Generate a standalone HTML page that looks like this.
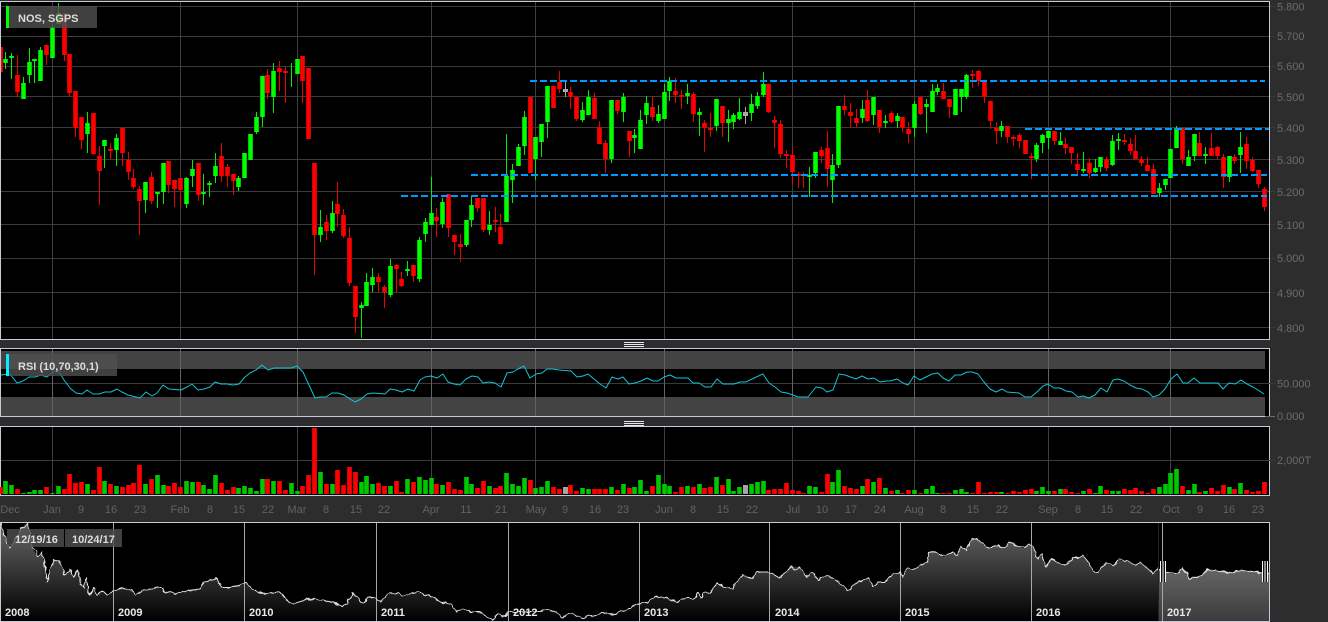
<!DOCTYPE html>
<html><head><meta charset="utf-8"><style>
html,body{margin:0;padding:0;background:#2d2d2d;width:1328px;height:622px;overflow:hidden}
svg{display:block}
text{font-family:"Liberation Sans",Arial,sans-serif;font-size:11px}
.a{fill:#6c6c6c}
.d{fill:#626262;text-anchor:middle}
.l{fill:#dcdcdc;font-weight:bold}
.y{fill:#e8e8e8;font-weight:bold}
</style></head><body>
<svg width="1328" height="622" viewBox="0 0 1328 622" xmlns="http://www.w3.org/2000/svg">
<defs>
<clipPath id="p1"><rect x="1" y="2" width="1268" height="337"/></clipPath>
<clipPath id="nl"><rect x="1" y="523" width="1157" height="98"/></clipPath>
<clipPath id="nr"><rect x="1159" y="523" width="110" height="98"/></clipPath>
<clipPath id="na"><rect x="1" y="523" width="1268" height="98"/></clipPath>
<linearGradient id="g1" gradientUnits="userSpaceOnUse" x1="0" y1="535" x2="0" y2="621"><stop offset="0" stop-color="#5c5c5c"/><stop offset="1" stop-color="#000"/></linearGradient>
<linearGradient id="g2" gradientUnits="userSpaceOnUse" x1="0" y1="565" x2="0" y2="621"><stop offset="0" stop-color="#686868"/><stop offset="1" stop-color="#3c3c3c"/></linearGradient>
<filter id="jag" filterUnits="userSpaceOnUse" x="0" y="515" width="1280" height="107" color-interpolation-filters="sRGB">
<feTurbulence type="fractalNoise" baseFrequency="0.22" numOctaves="1" seed="4" result="n"/>
<feDisplacementMap in="SourceGraphic" in2="n" scale="5" xChannelSelector="R" yChannelSelector="G"/>
</filter>
<path id="gb" fill="none" d="M5.5 59V63M11.5 56V58M23.5 83V99M29.5 62V75M34.5 59V61M40.5 50V81M52.5 27V58M58.5 13V24M87.5 123V134M104.5 140V146M116.5 138V150M145.5 182V200M157.5 192V194M163.5 163V192M186.5 178V204M192.5 169V176M203.5 192V194M209.5 183V185M215.5 166V176M238.5 178V187M244.5 153V178M250.5 134V160M256.5 117V132M262.5 76V117M273.5 71V97M297.5 59V74M320.5 227V235M332.5 213V231M361.5 305V308M366.5 282V306M372.5 277V285M390.5 266V295M407.5 269V271M419.5 240V279M425.5 222V234M431.5 213V225M442.5 202V224M466.5 220V245M471.5 205V220M489.5 225V230M506.5 176V222M512.5 170V180M518.5 147V166M524.5 117V146M535.5 137V159M541.5 124V142M547.5 86V122M582.5 110V120M588.5 97V115M611.5 100V159M623.5 97V112M634.5 135V138M640.5 120V149M646.5 103V115M658.5 114V121M664.5 92V119M669.5 81V91M687.5 93V96M699.5 112V115M716.5 99V126M728.5 119V123M733.5 115V122M739.5 112V119M751.5 104V113M757.5 96V106M763.5 84V95M809.5 175V177M815.5 152V173M832.5 165V180M838.5 106V165M862.5 109V118M873.5 97V115M885.5 121V123M897.5 116V121M914.5 104V128M926.5 104V107M932.5 91V112M937.5 88V92M955.5 89V115M961.5 89V97M966.5 75V97M1001.5 126V131M1036.5 145V159M1042.5 135V143M1048.5 131V138M1060.5 141V145M1083.5 169V171M1095.5 168V172M1100.5 157V167M1112.5 141V165M1118.5 139V141M1159.5 188V193M1165.5 179V185M1170.5 149V178M1176.5 128V148M1188.5 157V166M1194.5 134V156M1205.5 154V156M1229.5 156V177M1240.5 147V155"/>
<path id="rb" fill="none" d="M0.5 47V72M17.5 75V92M46.5 45V55M64.5 13V55M69.5 54V93M75.5 91V128M81.5 117V140M93.5 113V154M99.5 156V171M110.5 149V151M122.5 128V153M128.5 160V172M133.5 178V187M139.5 189V201M151.5 177V201M168.5 161V185M174.5 180V189M180.5 178V190M198.5 163V195M221.5 156V176M227.5 167V176M233.5 174V181M267.5 75V93M279.5 68V72M285.5 71V73M302.5 56V81M308.5 68V139M314.5 163V235M326.5 222V231M337.5 204V214M343.5 215V236M349.5 238V283M355.5 286V317M378.5 277V282M384.5 287V292M396.5 265V269M401.5 279V286M413.5 265V276M436.5 217V221M448.5 194V228M454.5 235V242M460.5 244V247M477.5 198V208M483.5 198V230M495.5 220V222M500.5 227V244M530.5 97V173M553.5 86V108M559.5 82V89M570.5 92V97M576.5 97V119M594.5 98V119M599.5 127V144M605.5 143V159M617.5 100V111M629.5 131V141M652.5 107V117M675.5 91V95M681.5 95V97M693.5 94V114M704.5 123V128M710.5 128V130M722.5 106V123M768.5 84V112M774.5 120V123M780.5 124V154M786.5 154V156M792.5 155V172M798.5 174V176M803.5 174V176M821.5 150V156M827.5 148V169M844.5 106V110M850.5 112V116M856.5 118V123M867.5 100V121M879.5 110V127M891.5 113V122M902.5 117V128M908.5 129V134M920.5 97V114M943.5 91V99M949.5 99V107M972.5 74V76M978.5 71V81M984.5 82V97M990.5 101V121M996.5 128V131M1007.5 126V137M1013.5 137V139M1019.5 135V141M1025.5 140V154M1031.5 156V158M1054.5 131V141M1065.5 144V148M1071.5 147V153M1077.5 164V170M1089.5 163V173M1106.5 159V168M1124.5 140V142M1130.5 144V151M1135.5 151V159M1141.5 159V163M1147.5 165V171M1153.5 169V194M1182.5 128V159M1199.5 143V156M1211.5 148V156M1217.5 147V156M1223.5 157V177M1234.5 157V161M1246.5 144V161M1252.5 160V171M1258.5 170V184M1264.5 189V207"/>
<path id="gv" fill="none" d="M5.5 481V494M11.5 485V494M23.5 493V494M29.5 492V494M34.5 490V494M40.5 490V494M52.5 493V494M58.5 486V494M87.5 484V494M104.5 481V494M116.5 486V494M145.5 484V494M157.5 475V494M163.5 485V494M186.5 481V494M192.5 482V494M203.5 485V494M209.5 489V494M215.5 475V494M238.5 488V494M244.5 486V494M250.5 488V494M256.5 491V494M262.5 479V494M273.5 481V494M291.5 483V494M297.5 491V494M320.5 472V494M332.5 484V494M361.5 482V494M366.5 476V494M372.5 484V494M390.5 486V494M407.5 479V494M419.5 477V494M425.5 480V494M431.5 478V494M442.5 485V494M466.5 477V494M471.5 484V494M489.5 486V494M506.5 473V494M512.5 484V494M518.5 486V494M524.5 478V494M535.5 488V494M541.5 487V494M547.5 481V494M582.5 488V494M588.5 489V494M611.5 487V494M623.5 484V494M634.5 487V494M640.5 480V494M646.5 491V494M658.5 475V494M664.5 484V494M669.5 486V494M687.5 486V494M699.5 484V494M716.5 477V494M728.5 479V494M733.5 491V494M739.5 487V494M751.5 484V494M757.5 482V494M763.5 481V494M809.5 486V494M815.5 487V494M832.5 482V494M838.5 470V494M862.5 486V494M873.5 482V494M885.5 488V494M897.5 490V494M914.5 490V494M926.5 489V494M932.5 486V494M937.5 493V494M955.5 490V494M961.5 489V494M966.5 492V494M1001.5 492V494M1036.5 491V494M1042.5 487V494M1048.5 491V494M1060.5 489V494M1083.5 491V494M1095.5 493V494M1100.5 486V494M1112.5 491V494M1118.5 491V494M1159.5 487V494M1165.5 484V494M1170.5 473V494M1176.5 469V494M1188.5 490V494M1194.5 484V494M1205.5 491V494M1229.5 487V494M1240.5 483V494"/>
<path id="rv" fill="none" d="M0.5 487V494M17.5 489V494M46.5 487V494M64.5 489V494M69.5 474V494M75.5 483V494M81.5 482V494M93.5 490V494M99.5 467V494M110.5 484V494M122.5 487V494M128.5 485V494M133.5 483V494M139.5 465V494M151.5 479V494M168.5 486V494M174.5 483V494M180.5 487V494M198.5 482V494M221.5 483V494M227.5 490V494M233.5 487V494M267.5 479V494M279.5 481V494M285.5 490V494M302.5 486V494M308.5 475V494M314.5 428V494M326.5 484V494M337.5 470V494M343.5 485V494M349.5 467V494M355.5 472V494M378.5 483V494M384.5 486V494M396.5 481V494M401.5 492V494M413.5 482V494M436.5 484V494M448.5 482V494M454.5 489V494M460.5 490V494M477.5 488V494M483.5 481V494M495.5 488V494M500.5 486V494M530.5 480V494M553.5 487V494M559.5 489V494M570.5 485V494M576.5 491V494M594.5 489V494M599.5 489V494M605.5 489V494M617.5 490V494M629.5 488V494M652.5 486V494M675.5 492V494M681.5 487V494M693.5 487V494M704.5 488V494M710.5 487V494M722.5 485V494M768.5 490V494M774.5 489V494M780.5 489V494M786.5 483V494M792.5 490V494M798.5 491V494M803.5 493V494M821.5 492V494M827.5 474V494M844.5 486V494M850.5 488V494M856.5 489V494M867.5 479V494M879.5 478V494M891.5 491V494M902.5 493V494M908.5 490V494M920.5 493V494M943.5 493V494M949.5 493V494M972.5 493V494M978.5 482V494M984.5 493V494M990.5 492V494M996.5 492V494M1007.5 493V494M1013.5 491V494M1019.5 492V494M1025.5 490V494M1031.5 489V494M1054.5 491V494M1065.5 489V494M1071.5 492V494M1077.5 493V494M1089.5 489V494M1106.5 490V494M1124.5 489V494M1130.5 490V494M1135.5 488V494M1141.5 491V494M1147.5 493V494M1153.5 489V494M1182.5 486V494M1199.5 492V494M1211.5 488V494M1217.5 491V494M1223.5 485V494M1234.5 489V494M1246.5 490V494M1252.5 492V494M1258.5 491V494M1264.5 482V494"/>
</defs>

<!-- main panel -->
<rect x="0.5" y="1.5" width="1269" height="338" fill="#000" stroke="#c6cad8"/>
<path fill="none" stroke="#3a3a3a" d="M1 6.5H1275M1 36.5H1275M1 66.5H1275M1 96.5H1275M1 127.5H1275M1 159.5H1275M1 191.5H1275M1 224.5H1275M1 258.5H1275M1 292.5H1275M1 327.5H1275"/>
<path fill="none" stroke="#3f3f3f" d="M52.5 2V339M180.5 2V339M297.5 2V339M431.5 2V339M535.5 2V339M664.5 2V339M792.5 2V339M914.5 2V339M1048.5 2V339M1170.5 2V339"/>
<g clip-path="url(#p1)" fill="none">
<path stroke="#00ef00" d="M5.5 52V69M11.5 53V79M23.5 77V99M29.5 48V83M34.5 59V83M40.5 47V81M52.5 24V58M58.5 3V24M87.5 112V153M104.5 140V168M116.5 134V166M145.5 182V213M157.5 192V208M163.5 163V204M186.5 177V208M192.5 160V187M203.5 174V205M209.5 181V197M215.5 153V183M238.5 176V191M256.5 112V134M262.5 76V127M273.5 63V113M291.5 63V87M320.5 210V242M332.5 201V233M361.5 302V338M366.5 273V306M372.5 268V292M390.5 259V297M407.5 261V276M419.5 237V282M425.5 218V242M431.5 177V225M442.5 198V228M466.5 220V247M471.5 196V227M489.5 211V235M506.5 134V222M512.5 164V203M518.5 144V166M524.5 111V155M535.5 137V180M541.5 124V157M547.5 86V138M582.5 102V122M588.5 90V115M611.5 100V163M623.5 93V122M634.5 129V153M640.5 110V149M646.5 96V124M658.5 105V123M664.5 84V119M669.5 77V101M687.5 84V104M699.5 108V136M716.5 99V131M728.5 110V142M733.5 113V129M739.5 98V120M751.5 94V121M757.5 92V109M763.5 72V97M809.5 167V197M815.5 152V178M832.5 154V203M838.5 106V168M862.5 100V123M873.5 97V125M885.5 115V128M897.5 113V128M914.5 101V137M926.5 99V133M932.5 84V112M937.5 84V95M966.5 74V99M961.5 89V112M1001.5 121V137M1036.5 143V162M1042.5 134V153M1048.5 131V149M1060.5 132V145M1083.5 152V173M1095.5 159V173M1100.5 157V172M1112.5 135V166M1118.5 133V150M1159.5 183V197M1165.5 179V190M1176.5 126V148M1188.5 150V166M1194.5 134V161M1205.5 147V164M1229.5 156V182M1240.5 132V173"/>
<use href="#gb" stroke="#00c800" stroke-width="5"/>
<use href="#gb" stroke="#00ff00" stroke-width="3"/>
<path stroke="#ef0000" d="M17.5 55V97M46.5 45V65M64.5 13V61M69.5 54V97M75.5 91V137M81.5 117V149M93.5 113V155M99.5 146V205M110.5 143V159M122.5 128V166M128.5 152V180M133.5 169V189M139.5 186V235M151.5 172V204M168.5 161V193M174.5 180V207M180.5 178V207M198.5 163V201M221.5 143V182M227.5 164V187M233.5 174V195M267.5 69V99M279.5 61V91M285.5 67V103M302.5 56V103M314.5 163V275M326.5 215V240M337.5 182V227M343.5 209V238M349.5 227V286M355.5 286V333M378.5 273V292M384.5 285V308M396.5 264V292M401.5 272V287M413.5 265V282M436.5 208V237M448.5 194V237M454.5 235V255M460.5 234V262M477.5 198V212M483.5 198V232M495.5 207V232M500.5 214V244M553.5 86V108M559.5 71V93M570.5 87V109M576.5 97V121M594.5 93V119M599.5 121V144M605.5 140V173M617.5 100V114M629.5 131V157M652.5 96V121M675.5 78V103M681.5 90V109M693.5 92V122M704.5 120V152M710.5 113V137M722.5 106V137M768.5 84V113M774.5 116V148M780.5 120V158M786.5 150V168M792.5 147V184M798.5 172V188M803.5 172V188M821.5 147V163M827.5 131V187M844.5 95V115M850.5 103V127M856.5 109V127M867.5 90V122M879.5 110V133M891.5 111V123M902.5 117V132M908.5 122V143M920.5 97V115M943.5 83V99M949.5 99V118M972.5 70V88M978.5 70V86M984.5 82V103M990.5 101V129M996.5 122V144M1007.5 126V143M1013.5 135V146M1019.5 133V148M1031.5 153V179M1054.5 131V145M1065.5 138V154M1071.5 147V164M1077.5 153V175M1089.5 158V178M1106.5 157V171M1124.5 134V145M1130.5 138V155M1135.5 135V159M1141.5 156V166M1147.5 157V171M1153.5 164V194M1182.5 128V164M1199.5 132V156M1211.5 133V156M1217.5 146V159M1223.5 154V188M1234.5 154V164M1246.5 137V169M1252.5 157V172M1258.5 170V188M1264.5 187V211"/>
<use href="#rb" stroke="#d00000" stroke-width="5"/>
<use href="#rb" stroke="#ff0000" stroke-width="3"/>
<path stroke="#a8a8a8" d="M565.5 82V97M745.5 107V124"/>
<path stroke="#a8a8a8" stroke-width="5" d="M565.5 89V92M745.5 112V116"/>
</g>
<g fill="none" stroke="#0099ff" stroke-width="2" stroke-dasharray="7 3">
<path d="M530 81H1265"/>
<path d="M1025 129H1269"/>
<path d="M471 175H1267"/>
<path d="M401 196H1267"/>
</g>
<path fill="none" stroke="#c6cad8" d="M1269.5 1V340"/>
<rect x="9" y="6" width="88" height="22" fill="#505050" fill-opacity=".8"/>
<rect x="6" y="6" width="3" height="22" fill="#00ff00"/>
<text class="l" x="18" y="22">NOS, SGPS</text>
<g class="a">
<text x="1277" y="10.500">5.800</text><text x="1277" y="40">5.700</text><text x="1277" y="70">5.600</text><text x="1277" y="101">5.500</text><text x="1277" y="132">5.400</text><text x="1277" y="164">5.300</text><text x="1277" y="196">5.200</text><text x="1277" y="229">5.100</text><text x="1277" y="262">5.000</text><text x="1277" y="297">4.900</text><text x="1277" y="332">4.800</text>
</g>

<!-- splitters -->
<path stroke="#e8e8e8" fill="none" d="M624 342.500H644M624 344.500H644M624 346.500H644M624 421.500H644M624 423.500H644M624 425.500H644"/>

<!-- RSI panel -->
<rect x="0.5" y="348.500" width="1269" height="68" fill="#000" stroke="#c6cad8"/>
<rect x="1" y="351" width="1264" height="18" fill="#434343"/>
<rect x="1" y="397" width="1264" height="19" fill="#434343"/>
<path fill="none" stroke="#3a3a3a" d="M1 383.500H1275"/>
<path fill="none" stroke="#6a6a6a" d="M1265 416.500H1275"/>
<path fill="none" stroke="#626262" d="M52.500 349V416M180.500 349V416M297.500 349V416M431.500 349V416M535.500 349V416M664.500 349V416M792.500 349V416M914.500 349V416M1048.500 349V416M1170.500 349V416"/>
<path fill="none" stroke="#12c4d4" stroke-width="1" stroke-linejoin="round" d="M1 375L10 374L17 383L23 381L29 377L35 377L41 375L47 377L53 372L58 370L64 380L70 388L76 393L82 394L87 390L93 394L99 394L105 392L111 392L117 389L122 392L128 395L140 398L146 392L152 396L157 393L163 385L169 389L181 390L187 387L192 384L198 390L204 389L210 387L215 382L221 384L227 384L233 385L239 384L245 377L250 373L256 370L262 365L268 370L274 368L280 368L285 368L291 368L297 366L303 372L309 385L315 398L320 397L326 397L332 393L338 393L344 395L350 399L355 402L361 399L367 394L373 393L385 394L390 389L396 390L402 392L408 389L414 391L420 380L425 377L431 376L437 378L443 374L448 382L454 384L460 385L466 379L472 376L478 377L483 383L489 382L495 383L501 387L507 373L513 372L518 369L524 366L530 378L536 374L542 373L547 369L553 369L559 370L571 371L577 377L583 376L588 374L594 379L600 384L606 388L612 377L618 379L623 377L629 384L635 383L641 381L647 378L653 381L658 381L664 377L670 375L676 378L688 378L693 383L699 383L705 387L711 387L717 379L723 384L734 384L740 382L746 382L752 379L763 374L769 383L775 387L781 392L787 393L793 395L798 397L808 397L816 387L822 388L827 392L833 390L839 374L845 375L856 379L862 376L868 379L874 378L880 382L886 381L890 381L897 379L903 383L908 385L914 376L920 380L932 374L938 373L943 378L949 381L955 375L961 375L967 372L972 372L978 374L984 382L990 389L996 392L1002 389L1007 392L1019 393L1025 397L1031 397L1037 392L1043 386L1048 384L1054 388L1060 388L1066 391L1072 392L1078 397L1083 396L1089 398L1095 395L1101 388L1107 392L1113 380L1118 379L1124 381L1130 385L1136 388L1142 389L1148 392L1153 397L1159 395L1165 389L1171 379L1177 374L1183 383L1188 383L1194 378L1200 383L1206 383L1218 383L1223 389L1229 383L1235 384L1241 380L1247 384L1253 387L1258 390L1264 394"/>
<rect x="9" y="354" width="108" height="22" fill="#505050" fill-opacity=".8"/>
<rect x="6" y="354" width="3" height="22" fill="#00f0ff"/>
<text class="l" x="18" y="370">RSI (10,70,30,1)</text>
<text class="a" x="1277" y="387.500">50.000</text>
<text class="a" x="1277" y="420">0.000</text>

<!-- Volume panel -->
<rect x="0.5" y="426.500" width="1269" height="69" fill="#000" stroke="#c6cad8"/>
<path fill="none" stroke="#3a3a3a" d="M1 460.500H1275"/>
<path fill="none" stroke="#3f3f3f" d="M52.500 427V495M180.500 427V495M297.500 427V495M431.500 427V495M535.500 427V495M664.500 427V495M792.500 427V495M914.500 427V495M1048.500 427V495M1170.500 427V495"/>
<use href="#gv" stroke="#00a000" stroke-width="5"/>
<use href="#gv" stroke="#00c800" stroke-width="3"/>
<use href="#rv" stroke="#d80000" stroke-width="5"/>
<use href="#rv" stroke="#ff0000" stroke-width="3"/>
<path fill="none" stroke-width="5" stroke="#a4a4a4" d="M565.500 487V494M745.500 485V494"/>
<text class="a" x="1277" y="464">2,000T</text>

<!-- date axis -->
<g class="d">
<text x="10" y="513">Dec</text><text x="52" y="513">Jan</text><text x="81" y="513">9</text><text x="111" y="513">16</text><text x="140" y="513">23</text><text x="180" y="513">Feb</text><text x="210" y="513">8</text><text x="239" y="513">15</text><text x="268" y="513">22</text><text x="297" y="513">Mar</text><text x="326" y="513">8</text><text x="356" y="513">15</text><text x="384" y="513">22</text><text x="431" y="513">Apr</text><text x="466" y="513">11</text><text x="501" y="513">21</text><text x="536" y="513">May</text><text x="565" y="513">9</text><text x="595" y="513">16</text><text x="623" y="513">23</text><text x="664" y="513">Jun</text><text x="693" y="513">8</text><text x="723" y="513">15</text><text x="752" y="513">22</text><text x="793" y="513">Jul</text><text x="822" y="513">10</text><text x="851" y="513">17</text><text x="880" y="513">24</text><text x="914" y="513">Aug</text><text x="943" y="513">8</text><text x="973" y="513">15</text><text x="1002" y="513">22</text><text x="1048" y="513">Sep</text><text x="1078" y="513">8</text><text x="1107" y="513">15</text><text x="1136" y="513">22</text><text x="1171" y="513">Oct</text><text x="1200" y="513">9</text><text x="1229" y="513">16</text><text x="1258" y="513">23</text>
</g>

<!-- navigator -->
<rect x="0.500" y="522.500" width="1269" height="99" fill="#000" stroke="#c6cad8"/>
<g clip-path="url(#nl)"><path fill="url(#g1)" d="M1 523L5 538L9 548L15 540L22 528L27 523L29 528L32 547L38 557L42 553L45 565L47 581L50 572L54 560L59 562L65 575L70 570L74 577L77 570L83 589L86 578L90 595L93 588L98 595L103 591L107 595L113 591L123 588L132 590L135 595L143 590L157 587L167 592L175 594L183 592L200 589L204 582L213 580L216 578L222 587L233 587L245 583L253 589L263 594L280 592L287 600L293 604L300 601L310 599L330 601L342 607L348 602L352 593L358 598L364 603L368 597L375 598L380 602L388 594L400 593L403 596L417 592L433 597L440 602L450 604L457 612L463 609L470 612L480 612L493 621L498 614L505 617L508 612L517 612L530 612L540 611L553 610L563 618L570 613L582 618L593 616L603 613L613 614L623 611L630 609L633 605L639 604L647 602L654 597L667 598L677 602L683 598L695 598L698 592L701 598L703 593L710 592L718 583L725 588L733 588L743 574L752 578L758 572L769 572L780 578L791 567L800 567L807 577L813 573L818 580L827 575L840 583L848 591L855 583L868 578L873 587L878 582L885 582L892 575L900 572L902 577L908 568L913 570L927 562L929 552L935 551L943 557L952 552L957 555L961 546L966 550L970 541L975 538L980 542L987 548L998 545L1005 548L1009 542L1017 546L1025 548L1029 544L1034 548L1037 558L1042 554L1046 567L1052 558L1057 562L1065 566L1073 558L1078 558L1083 555L1090 565L1094 572L1098 572L1106 562L1113 566L1119 560L1130 562L1135 566L1140 562L1147 568L1153 574L1158 568L1158 621L1 621Z"/></g>
<g clip-path="url(#nr)"><path fill="url(#g2)" d="M1158 568L1166 572L1178 574L1183 568L1190 579L1202 575L1208 569L1230 573L1242 570L1262 573L1269 573L1269 621L1158 621Z"/></g>
<path fill="none" stroke="#a8a8a8" d="M113.500 523V621M244.500 523V621M376.500 523V621M508.500 523V621M639.500 523V621M769.500 523V621M900.500 523V621M1031.500 523V621M1162.500 523V621"/>
<g clip-path="url(#na)"><path filter="url(#jag)" fill="none" stroke="#e4e4e4" stroke-linejoin="round" d="M1 523L5 538L9 548L15 540L22 528L27 523L29 528L32 547L36 551L38 557L42 553L45 565L47 581L50 572L54 560L59 562L65 575L70 570L74 577L77 570L83 589L86 578L90 595L93 588L98 595L103 591L107 595L113 591L123 588L132 590L135 595L143 590L150 589L157 587L167 592L175 594L183 592L200 589L204 582L213 580L216 578L222 587L233 587L245 583L253 589L263 594L280 592L287 600L293 604L300 601L310 599L330 601L342 607L348 602L352 593L358 598L364 603L368 597L375 598L380 602L388 594L400 593L403 596L417 592L433 597L440 602L450 604L457 612L463 609L470 612L480 612L493 621L498 614L505 617L508 612L517 612L530 612L540 611L553 610L563 618L570 613L582 618L593 616L603 613L613 614L623 611L630 609L633 605L639 604L647 602L654 597L667 598L677 602L683 598L695 598L698 592L701 598L703 593L710 592L718 583L725 588L733 588L743 574L746 577L752 578L758 572L769 572L780 578L791 567L795 570L800 567L807 577L813 573L818 580L827 575L840 583L848 591L855 583L868 578L873 587L878 582L885 582L892 575L900 572L902 577L908 568L913 570L927 562L929 552L935 551L943 557L952 552L957 555L961 546L966 550L970 541L975 538L980 542L987 548L998 545L1005 548L1009 542L1017 546L1025 548L1029 544L1034 548L1037 558L1042 554L1046 567L1052 558L1057 562L1065 566L1073 558L1078 558L1083 555L1090 565L1094 572L1098 572L1106 562L1113 566L1119 560L1130 562L1135 566L1140 562L1147 568L1153 574L1158 568L1166 572L1178 574L1183 568L1190 579L1202 575L1208 569L1230 573L1242 570L1262 573L1269 573"/></g>
<path fill="none" stroke="#222" d="M1158.500 523V621"/>
<rect x="1160" y="561" width="6" height="21" fill="#111"/><path stroke="#fff" fill="none" d="M1160.500 561V582M1163 561V582M1165.500 561V582"/>
<rect x="1262" y="561" width="6" height="21" fill="#111"/><path stroke="#fff" fill="none" d="M1262.500 561V582M1265 561V582M1267.500 561V582"/>
<path fill="none" stroke="#c6cad8" d="M1269.500 522V622"/>
<rect x="7" y="529" width="57" height="18" fill="#505050" fill-opacity=".8"/>
<rect x="65" y="529" width="57" height="18" fill="#505050" fill-opacity=".8"/>
<text class="l" x="15" y="543">12/19/16</text>
<text class="l" x="72" y="543">10/24/17</text>
<g class="y">
<text x="5" y="616">2008</text><text x="118" y="616">2009</text><text x="249" y="616">2010</text><text x="381" y="616">2011</text><text x="513" y="616">2012</text><text x="644" y="616">2013</text><text x="775" y="616">2014</text><text x="905" y="616">2015</text><text x="1036" y="616">2016</text><text x="1167" y="616">2017</text>
</g>
</svg>
</body></html>
